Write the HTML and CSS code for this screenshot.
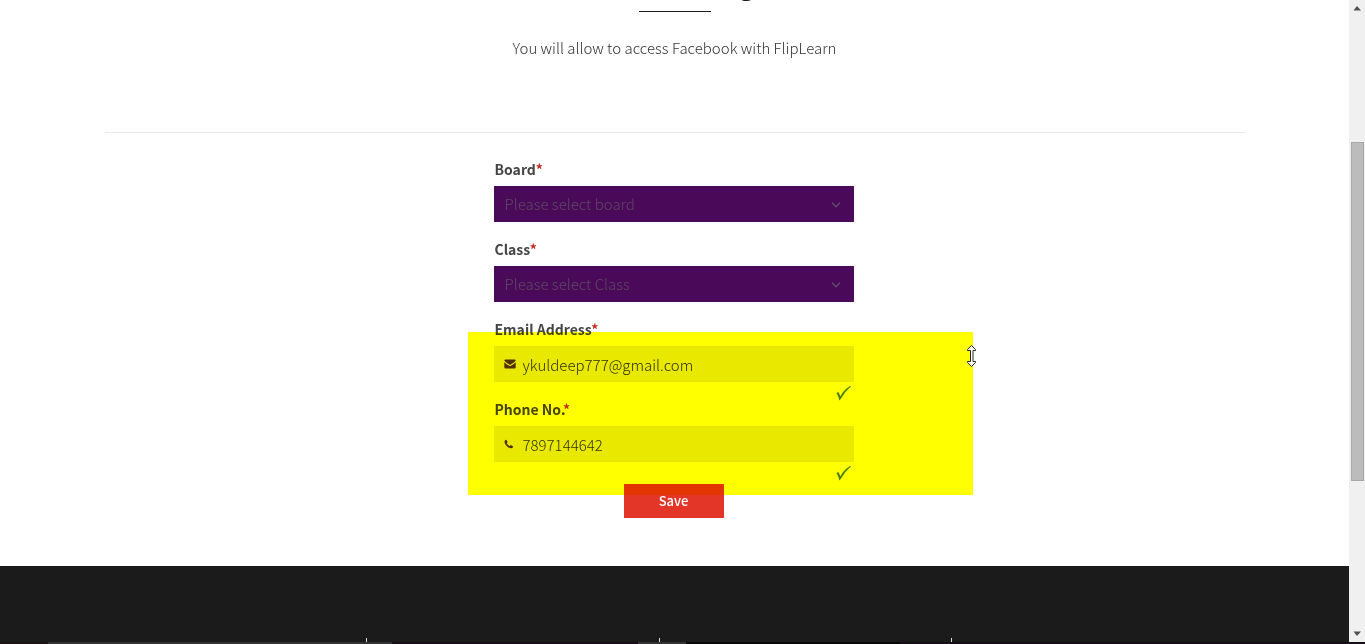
FILE: index.html
```html
<!DOCTYPE html>
<html lang="en">
<head>
<meta charset="utf-8">
<title>FlipLearn</title>
<meta name="viewport" content="width=device-width, initial-scale=1">
<link rel="stylesheet" href="styles.css">
</head>
<body>
<div class="window">
  <div class="page">
    <main class="content">
      <header class="intro">
        <h1 class="title">g</h1>
        <div class="rule"></div>
        <p class="lead">You will allow to access Facebook with FlipLearn</p>
      </header>
      <form class="form">
        <div class="group">
          <label class="label" for="board">Board<span class="required">*</span></label>
          <div class="control">
            <select class="field field-select" id="board"><option>Please select board</option></select>
            <svg class="chevron" viewBox="0 0 10 6" aria-hidden="true"><path d="M1 .8 5 4.8 9 .8"/></svg>
          </div>
        </div>
        <div class="group">
          <label class="label" for="class">Class<span class="required">*</span></label>
          <div class="control">
            <select class="field field-select" id="class"><option>Please select Class</option></select>
            <svg class="chevron" viewBox="0 0 10 6" aria-hidden="true"><path d="M1 .8 5 4.8 9 .8"/></svg>
          </div>
        </div>
        <div class="group">
          <label class="label" for="email">Email Address<span class="required">*</span></label>
          <div class="control">
            <input class="field field-text" id="email" type="email" value="ykuldeep777@gmail.com">
            <svg class="icon" viewBox="0 0 12 12" aria-hidden="true"><path d="M1.5 1.5h9q1.2 0 1.2 1Q11 4 6 7 1 4 .3 2.5q0-1 1.2-1ZM.3 4.200Q2 6 6 8.300 10 6 11.700 4.200V9q0 1.500-1.200 1.500h-9Q.3 10.500.3 9Z"/></svg>
          </div>
          <svg class="check" viewBox="0 0 18 18" aria-hidden="true"><path d="M1.500 9 3.300 8Q4.800 10 5.200 12.500 9 5.500 15.500 1.800L16 2.300Q9.500 8 6 14.500L4.500 16.500Q3.500 12 1.500 9Z"/></svg>
        </div>
        <div class="group">
          <label class="label" for="phone">Phone No.<span class="required">*</span></label>
          <div class="control">
            <input class="field field-text" id="phone" type="tel" value="7897144642">
            <svg class="icon" viewBox="0 0 12 12" aria-hidden="true"><path d="M2.300 1.800 3.600 4 2.800 5.200Q3.800 7.200 5.600 8L6.800 7.100 9.200 8.500Q9 10.500 7 10.300 2.800 9.600 .6 4.700.2 2 2.300 1.800Z"/></svg>
          </div>
          <svg class="check" viewBox="0 0 18 18" aria-hidden="true"><path d="M1.500 9 3.300 8Q4.800 10 5.200 12.500 9 5.500 15.500 1.800L16 2.300Q9.500 8 6 14.500L4.500 16.500Q3.500 12 1.500 9Z"/></svg>
        </div>
        <button class="save" type="button">Save</button>
        <div class="highlight"></div>
        <svg class="cursor" viewBox="0 0 12 24" aria-hidden="true"><path d="M5.500 1.500 9.500 5.500V6.500H7V17.500H9.500V18.500L5.500 22.500 1.500 18.500V17.500H4.500V6.500H1.500V5.500Z"/></svg>
      </form>
    </main>
    <footer class="footer">
      <div class="columns"><div class="column"></div><div class="column"></div><div class="column"></div></div>
    </footer>
  </div>
  <div class="scrollbar" aria-hidden="true">
    <svg class="arrow" viewBox="0 0 16 17"><path d="M4.500 10.500 8 6l4 4.500Z"/></svg>
    <div class="thumb"></div>
    <svg class="arrow arrow-down" viewBox="0 0 16 17"><path d="M4.500 6.500 8 11l4-4.500Z"/></svg>
  </div>
</div>
<div class="taskbar"></div>
</body>
</html>
```
FILE: styles.css
```css
* { box-sizing: border-box; }

body {
  display: flex;
  flex-direction: column;
  height: 100vh;
  margin: 0;
  overflow: hidden;
  background: #fff;
  color: #444;
  font-family: "Noto Sans CJK SC", "Noto Sans", sans-serif;
  font-size: 15px;
  font-weight: 300;
  line-height: 20px;
}

.window { display: flex; flex: 1; min-height: 0; }
.page { display: flex; flex: 1; flex-direction: column; min-width: 0; }
.content { width: 100%; max-width: 1140px; margin: 0 auto; }

.intro {
  display: flex;
  flex-direction: column;
  align-items: center;
  height: 133px;
  border-bottom: 1px solid #e8e8e8;
}

.title {
  display: flex;
  align-items: flex-end;
  height: 11px;
  margin: 0;
  padding-left: 144px;
  color: #1b1b1b;
  font-size: 22px;
  line-height: 50px;
}

.rule { width: 72px; height: 1px; background: #1b1b1b; }
.lead { margin: 26px 0 0; color: #333; }

.form {
  position: relative;
  width: 362px;
  margin: 26px auto 0;
  padding-right: 2px;
}

.group { display: flex; flex-direction: column; height: 80px; }
.label { margin: 0 0 7px 1px; color: #444; font-size: 14px; font-weight: 700; }
.required { color: #c22b1b; }
.control { position: relative; }

.field {
  display: block;
  width: 100%;
  height: 36px;
  margin: 0;
  border: 0;
  border-radius: 0;
  outline: 0;
  color: #333;
  font: inherit;
}

.field-select { padding: 0 32px 0 11px; appearance: none; background: #4b0a59; color: #5c4a60; }
.field-text { padding: 0 11px 0 29px; background: #e8e8e8; }

.chevron { position: absolute; top: 16px; right: 13px; width: 10px; height: 6px; fill: none; stroke: #5f4a68; stroke-width: 1.5; }
.icon { position: absolute; top: 12px; left: 10px; width: 12px; height: 12px; fill: #502f24; }
.check { align-self: flex-end; flex: none; width: 18px; height: 18px; margin: 2px 1px 0 0; fill: #4b7d28; }

.save {
  display: block;
  width: 100px;
  height: 34px;
  margin: 5px auto 48px;
  padding: 0;
  border: 0;
  background: #e33528;
  color: #fff;
  font: inherit;
  font-size: 13px;
  font-weight: 500;
}

.highlight {
  position: absolute;
  top: 173px;
  left: -26px;
  width: 505px;
  height: 163px;
  background: #ff0;
  mix-blend-mode: multiply;
  pointer-events: none;
}

.cursor { position: absolute; top: 185px; left: 472px; width: 12px; height: 24px; fill: #fff; stroke: #222; }

.footer { display: flex; flex: 1; align-items: flex-end; justify-content: center; padding-right: 30px; background: #1b1b1b; }
.columns { display: grid; grid-template-columns: repeat(4, 1fr); width: 100%; max-width: 1170px; }
.column { height: 4px; border-right: 1px solid #ddd; }

.scrollbar { display: flex; flex-direction: column; width: 16px; background: #f0f0f0; }
.arrow { width: 16px; height: 17px; fill: #505050; }
.thumb { flex: 1; margin: 125px 1px 144px 2px; border: 1px solid #a8a8a8; background: #bcbcbc; }

.taskbar {
  height: 2px;
  background: linear-gradient(90deg, #1d1315 0 48px, #333 48px 392px, #180d19 392px 638px, #333 638px 686px, #080808 686px 900px, #170d18 900px);
}
```
